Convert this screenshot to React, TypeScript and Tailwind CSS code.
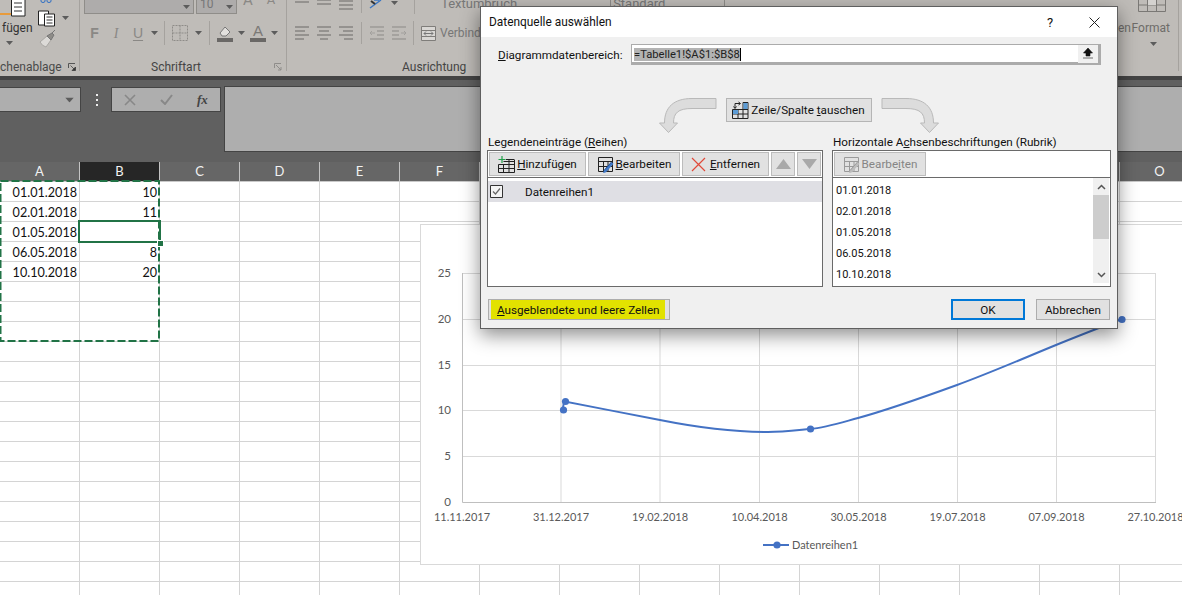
import React from 'react';

const columns = ['A', 'B', 'C', 'D', 'E', 'F', 'G', 'H', 'I', 'J', 'K', 'L', 'M', 'N', 'O'];
// G bis N liegen hinter dem Dialog
const visibleHeaders = ['A', 'B', 'C', 'D', 'E', 'F', 'O'];
const cellData: Record<string, string> = {
    A0: '01.01.2018',
    B0: '10',
    A1: '02.01.2018',
    B1: '11',
    A2: '01.05.2018',
    A3: '06.05.2018',
    B3: '8',
    A4: '10.10.2018',
    B4: '20',
};
const rows = Array.from({ length: 21 }, (_, i) => i);
const categories = ['01.01.2018', '02.01.2018', '01.05.2018', '06.05.2018', '10.10.2018'];

const xTicks = [
    { x: 462, label: '11.11.2017' },
    { x: 561, label: '31.12.2017' },
    { x: 660, label: '19.02.2018' },
    { x: 759.5, label: '10.04.2018' },
    { x: 858.5, label: '30.05.2018' },
    { x: 957.5, label: '19.07.2018' },
    { x: 1056.5, label: '07.09.2018' },
    { x: 1155.5, label: '27.10.2018' },
];
const yTicks = [
    { y: 502, label: '0' },
    { y: 456, label: '5' },
    { y: 410, label: '10' },
    { y: 365, label: '15' },
    { y: 319, label: '20' },
    { y: 273, label: '25' },
];

function Caret({ className = '' }: { className?: string }) {
    return (
        <svg width="7" height="4" viewBox="0 0 7 4" className={`shrink-0 ${className}`}>
            <path d="M0 0h7L3.5 4z" fill="#5c5c5c" />
        </svg>
    );
}

function Launcher() {
    return (
        <svg width="8" height="8" viewBox="0 0 8 8" className="shrink-0">
            <path d="M.5 5V.5H7" fill="none" stroke="#555" />
            <path d="M2.5 2.5l4 4M7.5 4v3.5H4z" fill="#333" stroke="#333" strokeWidth=".7" />
        </svg>
    );
}

function GridIcon({ children, dim = false }: { children?: React.ReactNode; dim?: boolean }) {
    const stroke = dim ? '#9a9a9a' : '#222';
    return (
        <svg width="17" height="17" viewBox="0 0 17 17" className="shrink-0">
            <path d="M1.5 1.5h14v14h-14zM1.5 5.5h14M1.5 10.5h14M6.5 5.5v10M11 5.5v10" fill="none" stroke={stroke} />
            {children}
        </svg>
    );
}

function AddIcon() {
    return (
        <svg width="17" height="17" viewBox="0 0 17 17" className="shrink-0">
            <path d="M5.5 5.5h11M.5 8.5h16V16.5H.5zM5.5 8.5v8M11 4v12.5M.5 12.5h16M16.5 4v5M8 3.5h8.5" fill="none" stroke="#222" />
            <path d="M4 0v7M.5 3.5h7" stroke="#22a04a" strokeWidth="1.2" fill="none" />
        </svg>
    );
}

function PencilPath({ dim = false }: { dim?: boolean }) {
    return (
        <>
            <path d="M7 14.5L14.5 6l2 1.8-7.5 8.5-3 1z" fill={dim ? '#bcbcbc' : '#3f78c8'} />
            <path d="M7 14.5L14.5 6" stroke={dim ? '#999' : '#1d4d94'} fill="none" />
        </>
    );
}

function SwapIcon() {
    return (
        <svg width="17" height="18" viewBox="0 0 17 18" className="shrink-0">
            <path d="M.5 8.5h15.5v9H.5zM6 8.5v9M11 1.5v16M.5 13h15.5M11 1.5h5v7" fill="none" stroke="#222" />
            <path d="M11.5 2h4v6h-4zM1 9h5v4H1z" fill="#5b9bd5" />
            <path d="M3 7V2.5h5M1.5 5.5L3 7.5l1.5-2M6.5 1l2 1.5-2 1.5" fill="none" stroke="#222" />
        </svg>
    );
}

function FlowArrow({ className = '' }: { className?: string }) {
    return (
        <svg width="61" height="37" viewBox="656 96 61 37" className={`shrink-0 ${className}`}>
            <path
                d="M716 97.5H692C674 97.5 664.5 106 664.5 122H659.5L668.5 131.5L677.5 122H673.5C673.5 112 678 107.5 692 107.5H716Z"
                fill="#dcdcdc"
                stroke="#b9b9b9"
            />
        </svg>
    );
}

function ToolButton({
    icon,
    children,
    width,
    disabled = false,
}: {
    icon?: React.ReactNode;
    children?: React.ReactNode;
    width: string;
    disabled?: boolean;
}) {
    return (
        <div
            className={`${width} h-[24px] shrink-0 flex items-center justify-center gap-[2px] bg-[#e1e1e1] border border-[#bcbcbc] [&>span]:pt-[1px] ${disabled ? 'text-[#858585]' : 'text-[#111]'}`}
        >
            {icon}
            {children}
        </div>
    );
}

function AlignTop() {
    return (
        <svg width="60" height="10" viewBox="0 0 60 10" className="shrink-0">
            <path d="M0 2h14M22 0h14M22 4h14M44 1h14M44 5h14M44 9h14" stroke="#6a6866" />
        </svg>
    );
}

function AlignIcon({ variant, className = '' }: { variant: number; className?: string }) {
    const paths = [
        'M0 1h14M0 5h10M0 9h14M0 13h9',
        'M0 1h14M2 5h10M0 9h14M3 13h8',
        'M0 1h14M4 5h10M0 9h14M5 13h9',
    ];
    return (
        <svg width="14" height="14" viewBox="0 0 14 14" className={`shrink-0 ${className}`}>
            <path d={paths[variant]} stroke="#6a6866" />
        </svg>
    );
}

function IndentIcon({ className = '' }: { className?: string }) {
    return (
        <svg width="14" height="14" viewBox="0 0 14 14" className={`shrink-0 ${className}`}>
            <path d="M0 1h14M7 5h7M7 9h7M0 13h14" stroke="#8b8986" />
            <path d="M0 7h5M0 7l2-2M0 7l2 2" fill="none" stroke="#a2a09d" />
        </svg>
    );
}

function Ribbon() {
    return (
        <div className="h-[76px] bg-[#bfbcb8] flex overflow-hidden text-[12px] text-[#4a4a4a] font-['Roboto',sans-serif]">
            {/* Zwischenablage */}
            <div className="w-[80px] shrink-0 border-r border-[#a5a29e] h-[71px] flex flex-col">
                <div className="h-[60px] shrink-0 flex">
                    <div className="w-[37px] shrink-0 flex flex-col">
                        <svg width="37" height="17" viewBox="0 0 37 17" className="shrink-0">
                            <path d="M0 14h11" stroke="#e89b3c" strokeWidth="2" />
                            <path d="M11.5 -2h13.5v18H11.5z" fill="#fff" stroke="#222" />
                            <path d="M14 3h8M14 7h8M14 11h8" stroke="#333" />
                        </svg>
                        <span className="mt-[3px] pl-[2px] leading-[16px] text-[#333]">fügen</span>
                        <Caret className="ml-[6px] mt-[5px]" />
                    </div>
                    <svg width="30" height="50" viewBox="0 0 30 50" className="shrink-0">
                        <path d="M4 0v1q0 1.5 2 1.5t2-1.5V0M10 0v1q0 1.5 2 1.5t2-1.5V0" fill="none" stroke="#2f6fc4" />
                        <path d="M1.5 11h10v14h-10z" fill="#fff" stroke="#222" />
                        <path d="M7.5 14h10v12h-10z" fill="#fff" stroke="#222" />
                        <path d="M9.5 17h6M9.5 20h6M9.5 23h6" stroke="#333" />
                        <path d="M3 42l7-6 4 4-5 7q-4-1-6-5z" fill="#dcdad7" stroke="#a8a6a2" />
                        <path d="M10 36l5-3 2 2-3 5zM15 33l3-3" fill="#8e8c88" stroke="#777" />
                    </svg>
                    <Caret className="mt-[16px] ml-[-5px]" />
                </div>
                <div className="flex shrink-0 items-center">
                    <span className="w-[68px] leading-[14px] whitespace-nowrap overflow-hidden">chenablage</span>
                    <Launcher />
                </div>
            </div>

            {/* Schriftart */}
            <div className="w-[207px] shrink-0 border-r border-[#a5a29e] h-[71px] flex flex-col pl-[4px]">
                <div className="h-[14px] shrink-0 flex">
                    <div className="w-[110px] h-[14px] border border-t-0 border-[#8f8d89] bg-[#aeacab] flex justify-end items-center pr-[3px]">
                        <Caret />
                    </div>
                    <div className="ml-[2px] w-[41px] h-[14px] border border-t-0 border-[#8f8d89] bg-[#aeacab] flex justify-between items-center pl-[3px] pr-[3px] text-[#777]">
                        <span className="leading-[10px] -mt-[6px]">10</span>
                        <Caret />
                    </div>
                    <span className="ml-[6px] -mt-[7px] text-[15px] leading-[14px] text-[#8a8885]">A</span>
                    <span className="ml-[14px] -mt-[7px] text-[13px] leading-[14px] text-[#8a8885]">A</span>
                </div>
                <div className="h-[32px] shrink-0 mt-[3px] flex items-center text-[#8a8885]">
                    <span className="w-[21px] text-center font-bold text-[14px] font-['Liberation_Sans',sans-serif]">F</span>
                    <span className="w-[22px] text-center italic text-[14px] font-['Liberation_Serif',serif]">I</span>
                    <span className="w-[22px] text-center text-[14px] underline underline-offset-2 font-['Liberation_Sans',sans-serif]">U</span>
                    <Caret className="ml-[2px]" />
                    <span className="ml-[6px] h-[24px] w-px bg-[#a5a29e]" />
                    <svg width="16" height="16" viewBox="0 0 16 16" className="ml-[7px]">
                        <path d="M.5 .5h15v15H.5zM8 .5v15M.5 8h15" fill="none" stroke="#8e8c89" strokeDasharray="2 1" />
                    </svg>
                    <Caret className="ml-[7px]" />
                    <span className="ml-[7px] h-[24px] w-px bg-[#a5a29e]" />
                    <svg width="16" height="17" viewBox="0 0 16 17" className="ml-[7px]">
                        <path d="M3 8l5-6 5 5-4 4H5z" fill="#e2e0dd" stroke="#777" />
                        <path d="M0 13h16v4H0z" fill="#6a6866" />
                    </svg>
                    <Caret className="ml-[5px]" />
                    <span className="ml-[5px] w-[16px] flex flex-col items-center leading-[12px] text-[15px] text-[#7b7976] font-['Liberation_Sans',sans-serif]">
                        A<span className="w-[16px] h-[4px] bg-[#6a6866] mt-[1px]" />
                    </span>
                    <Caret className="ml-[5px]" />
                </div>
                <div className="mt-[11px] shrink-0 flex items-center pl-[67px] leading-[14px] text-[#444]">
                    <span className="w-[123px]">Schriftart</span>
                    <svg width="8" height="8" viewBox="0 0 8 8" className="shrink-0">
                        <path d="M.5 5V.5H7M2 2l5 5M7 4v3H4" fill="none" stroke="#8f8d8a" />
                    </svg>
                </div>
            </div>

            {/* Ausrichtung */}
            <div className="flex-1 h-[71px] flex flex-col pl-[8px]">
                <div className="h-[14px] shrink-0 flex items-start">
                    <AlignTop />
                    <span className="ml-[6px] h-[13px] w-px bg-[#a5a29e] shrink-0" />
                    <svg width="22" height="9" viewBox="0 0 22 9" className="ml-[7px] shrink-0">
                        <path d="M1 8L12 0M5 0h5" stroke="#3a76c4" strokeWidth="1.4" fill="none" />
                        <path d="M2 1l4 3" stroke="#333" strokeWidth="2" />
                    </svg>
                    <Caret className="mt-[1px]" />
                    <span className="ml-[16px] h-[14px] w-px bg-[#a5a29e] shrink-0" />
                    <span className="ml-[26px] leading-[10px] -mt-[1px] text-[13px] text-[#777] whitespace-nowrap">Textumbruch</span>
                    <span className="ml-[93px] w-[115px] shrink-0 h-[8px] border-x border-[#8f8d89] leading-[7px] pl-[2px] text-[13px] text-[#777]">Standard</span>
                </div>
                <div className="h-[32px] shrink-0 mt-[3px] flex items-center">
                    <AlignIcon variant={0} />
                    <AlignIcon variant={1} className="ml-[8px]" />
                    <AlignIcon variant={2} className="ml-[8px]" />
                    <span className="ml-[8px] h-[22px] w-px bg-[#a5a29e] shrink-0" />
                    <IndentIcon className="ml-[8px]" />
                    <IndentIcon className="ml-[8px] -scale-x-100" />
                    <span className="ml-[7px] h-[24px] w-px bg-[#a5a29e] shrink-0" />
                    <svg width="15" height="15" viewBox="0 0 15 15" className="ml-[7px] shrink-0">
                        <path d="M.5 .5h14v14H.5zM.5 4.5h14M.5 10.5h14" fill="#d9d7d4" stroke="#7f7d7a" />
                        <path d="M3 7.5h9M3 7.5l2-2M3 7.5l2 2M12 7.5l-2-2M12 7.5l-2 2" fill="none" stroke="#777" />
                    </svg>
                    <span className="ml-[4px] text-[#777]">Verbinden</span>
                </div>
                <div className="mt-[11px] shrink-0 pl-[107px] leading-[14px] text-[#444]">Ausrichtung</div>
            </div>

            {/* rechts vom Dialog */}
            <div className="w-[65px] shrink-0 h-[71px] flex flex-col items-start">
                <svg width="30" height="12" viewBox="0 0 30 12" className="ml-[25px] shrink-0">
                    <path d="M.5 -1h27v12.5H.5zM.5 5h27M9.5 -1v12.5M18.5 -1v12.5" fill="none" stroke="#7a7875" />
                    <path d="M10 -1h8v6h-8z" fill="#d4d2cf" />
                </svg>
                <div className="mt-[9px] pl-[5px] w-full flex justify-between pr-[8px] leading-[14px] text-[#6e6c69]">
                    <span>en</span>
                    <span>Format</span>
                </div>
                <Caret className="mt-[7px] ml-[37px]" />
            </div>
            <div className="w-px h-[71px] bg-[#a5a29e] shrink-0" />
            <div className="w-[3px] shrink-0" />
        </div>
    );
}

function FormulaBar() {
    return (
        <div className="h-[86px] bg-[#606060] border-t-[4px] border-[#444] flex items-start pt-[7px]">
            <div className="w-[81px] shrink-0 h-[25px] bg-[#aeaeae] border border-[#444] border-l-0 flex items-center justify-end pr-[7px]">
                <Caret className="scale-125" />
            </div>
            <div className="w-[30px] shrink-0 h-[25px] flex flex-col items-center justify-center gap-[3px] pl-[1px]">
                <span className="w-[2px] h-[2px] bg-[#eee]" />
                <span className="w-[2px] h-[2px] bg-[#eee]" />
                <span className="w-[2px] h-[2px] bg-[#eee]" />
            </div>
            <div className="w-[110px] shrink-0 h-[25px] bg-[#aeaeae] border border-[#444] flex items-center">
                <svg width="12" height="12" viewBox="0 0 12 12" className="ml-[12px]">
                    <path d="M1 1l10 10M11 1L1 11" stroke="#888" strokeWidth="1.6" />
                </svg>
                <svg width="13" height="11" viewBox="0 0 13 11" className="ml-[24px]">
                    <path d="M1 6l4 4 7-9" stroke="#888" strokeWidth="2" fill="none" />
                </svg>
                <span className="ml-[24px] text-[13px] font-bold italic text-[#444] font-['Liberation_Serif',serif]">fx</span>
            </div>
            <div className="ml-[3px] flex-1 h-[66px] -mt-[1px] bg-[#aeaeae] border border-[#444] border-r-0" />
        </div>
    );
}

function ColumnHeaders() {
    return (
        <div className="h-[20px] flex bg-[#666] border-b border-[#c9c9c9] font-['Lato',sans-serif] text-[13px] text-[#f2f2f2]">
            {columns.map((col) => (
                <div
                    key={col}
                    className={`w-[80px] shrink-0 h-[19px] flex items-center justify-center border-r border-[#c4c4c4] ${col === 'B' ? 'bg-[#262626]' : ''}`}
                >
                    {visibleHeaders.includes(col) ? col : ''}
                </div>
            ))}
        </div>
    );
}

function Sheet() {
    return (
        <div className="grid grid-cols-[repeat(15,80px)] auto-rows-[20px] font-['Lato',sans-serif] text-[12.6px] text-[#111]">
            {rows.flatMap((row) =>
                columns.map((col) => (
                    <div
                        key={col + row}
                        className="border-r border-b border-[#d4d4d4] flex items-center justify-end pr-[2px] pt-[3px] leading-none"
                    >
                        {cellData[col + row]}
                    </div>
                )),
            )}
        </div>
    );
}

function Chart() {
    return (
        <div className="absolute left-[420px] top-[224px] w-[780px] h-[341px] bg-white border border-[#d9d9d9]">
            <svg width="780" height="341" viewBox="421 225 780 341" className="block font-['Lato',sans-serif]">
                {yTicks.slice(1).map((t) => (
                    <line key={t.y} x1="462" x2="1156" y1={t.y + 0.5} y2={t.y + 0.5} stroke="#d9d9d9" />
                ))}
                {xTicks.slice(1).map((t) => (
                    <line key={t.x} x1={t.x} x2={t.x} y1="273" y2="502" stroke="#d9d9d9" />
                ))}
                <path d="M462.5 273v229.5H1156" fill="none" stroke="#bfbfbf" />
                {yTicks.map((t) => (
                    <text key={t.label} x="451" y={t.y + 4} textAnchor="end" fontSize="11.5" fill="#595959">
                        {t.label}
                    </text>
                ))}
                {xTicks.map((t) => (
                    <text key={t.label} x={t.x} y="521" textAnchor="middle" fontSize="11" fill="#595959">
                        {t.label}
                    </text>
                ))}
                <path
                    d="M563 410C563 406 563.5 403 565 401.5C597 408 628 413.6 660 420C696 427.2 732 432 768 432C782 432 796 430.3 810 429C826 427.5 842 422.3 858 418C891 409 924 397 957 385C990 373 1023 358.5 1056 345C1078 336 1100 327.5 1122 319"
                    fill="none"
                    stroke="#4472c4"
                    strokeWidth="2"
                />
                {[
                    [563.5, 410],
                    [565.5, 401.5],
                    [810.5, 429],
                    [1122, 319.5],
                ].map(([cx, cy]) => (
                    <circle key={cx} cx={cx} cy={cy} r="3.6" fill="#4472c4" />
                ))}
                <line x1="763" x2="789" y1="545" y2="545" stroke="#4472c4" strokeWidth="2" />
                <circle cx="777" cy="545" r="3.6" fill="#4472c4" />
                <text x="792" y="549" fontSize="11" fill="#595959">
                    Datenreihen1
                </text>
            </svg>
        </div>
    );
}

function SelectionOverlay() {
    return (
        <>
            <svg width="164" height="166" viewBox="0 178 164 166" className="absolute left-0 top-[178px]">
                <rect x="0.5" y="181" width="158.5" height="160" fill="none" stroke="#217346" strokeWidth="2" strokeDasharray="8 3" />
            </svg>
            <div className="absolute left-[78px] top-[220px] w-[83px] h-[23px] border-2 border-[#217346]" />
            <div className="absolute left-[157px] top-[240px] w-[5px] h-[5px] bg-[#217346] border border-white box-content" />
        </>
    );
}

function Dialog() {
    return (
        <div className="absolute left-[480px] top-[6px] w-[638px] h-[323px] bg-[#f0f0f0] border border-[#5f5f5f] shadow-[0_6px_18px_rgba(0,0,0,0.45)] flex flex-col font-['Roboto',sans-serif] text-[11.7px] text-[#111] leading-[15px]">
            <div className="h-[30px] shrink-0 bg-white flex items-center pl-[8px] text-[11.9px]">
                <span className="flex-1">Datenquelle auswählen</span>
                <span className="w-[14px] text-center text-[13px] mr-[32px]">?</span>
                <svg width="11" height="11" viewBox="0 0 11 11" className="mr-[17px]">
                    <path d="M.5 .5l10 10M10.5 .5l-10 10" stroke="#222" fill="none" />
                </svg>
            </div>

            <div className="flex flex-col pl-[6px] pr-[6px]">
                {/* Datenbereich */}
                <div className="mt-[7px] h-[21px] flex items-center pl-[11px]">
                    <span className="w-[133px] shrink-0 pt-[1px]">
                        <u>D</u>iagrammdatenbereich:
                    </span>
                    <div className="w-[470px] h-[21px] shrink-0 bg-white border border-[#ababab] border-r-[3px] border-b-[3px] flex items-center pl-[2px]">
                        <span className="mt-[1px] bg-[#b3b3b3] border-r border-black leading-[13px] text-[11.2px] text-[#222]">=Tabelle1!$A$1:$B$8</span>
                        <span className="flex-1" />
                        <div className="w-[20px] h-[18px] bg-[#f0f0f0] flex items-center justify-center">
                            <svg width="10" height="11" viewBox="0 0 10 11">
                                <path d="M5 0l4.5 5H7v3H3V5H.5zM0 10h10" fill="#111" stroke="#111" strokeWidth=".6" />
                            </svg>
                        </div>
                    </div>
                </div>

                {/* Zeile/Spalte */}
                <div className="mt-[32px] h-[34px] flex items-start justify-center pr-[1px]">
                    <FlowArrow />
                    <div className="ml-[9px] w-[146px] h-[24px] mt-[1px] shrink-0 flex items-center justify-center gap-[2px] bg-[#e1e1e1] border border-[#b5b5b5]">
                        <SwapIcon />
                        <span className="pt-[1px]">
                            Zeile/Spalte <u>t</u>auschen
                        </span>
                    </div>
                    <FlowArrow className="ml-[9px] -scale-x-100" />
                </div>

                {/* Listen */}
                <div className="mt-[4px] flex gap-[9px]">
                    <div className="w-[336px] shrink-0">
                        <div className="h-[15px] pl-[1px] leading-[14px]">
                            Legendeneinträge (<u>R</u>eihen)
                        </div>
                        <div className="h-[137px] bg-white border border-[#6a6a6a] flex flex-col">
                            <div className="h-[27px] shrink-0 border-b border-[#6a6a6a] flex items-center pl-[1px] gap-[2px]">
                                <ToolButton width="w-[97px]" icon={<AddIcon />}>
                                    <span>
                                        <u>H</u>inzufügen
                                    </span>
                                </ToolButton>
                                <ToolButton
                                    width="w-[92px]"
                                    icon={
                                        <GridIcon>
                                            <PencilPath />
                                        </GridIcon>
                                    }
                                >
                                    <span>
                                        <u>B</u>earbeiten
                                    </span>
                                </ToolButton>
                                <ToolButton
                                    width="w-[87px]"
                                    icon={
                                        <svg width="15" height="15" viewBox="0 0 15 15" className="shrink-0 mr-[2px]">
                                            <path d="M1 1l13 13M14 1L1 14" stroke="#e04a3a" strokeWidth="1.2" />
                                        </svg>
                                    }
                                >
                                    <span>
                                        <u>E</u>ntfernen
                                    </span>
                                </ToolButton>
                                <ToolButton
                                    width="w-[24px]"
                                    disabled
                                    icon={
                                        <svg width="15" height="10" viewBox="0 0 15 10">
                                            <path d="M7.5 0L15 10H0z" fill="#a9a9a9" />
                                        </svg>
                                    }
                                />
                                <ToolButton
                                    width="w-[24px]"
                                    disabled
                                    icon={
                                        <svg width="15" height="10" viewBox="0 0 15 10">
                                            <path d="M7.5 10L15 0H0z" fill="#a9a9a9" />
                                        </svg>
                                    }
                                />
                            </div>
                            <div className="mt-[3px] h-[21px] bg-[#dfdfe4] flex items-center pl-[2px]">
                                <svg width="13" height="13" viewBox="0 0 13 13" className="shrink-0">
                                    <path d="M.5 .5h12v12H.5z" fill="#f4f4f4" stroke="#333" />
                                    <path d="M3 6.5l2.5 2.5L10 3.5" fill="none" stroke="#666" strokeWidth="1.2" />
                                </svg>
                                <span className="ml-[22px] pt-[1px]">Datenreihen1</span>
                            </div>
                        </div>
                    </div>
                    <div className="w-[279px] shrink-0">
                        <div className="h-[15px] pl-[1px] leading-[14px] whitespace-nowrap">
                            Horizontale A<u>c</u>hsenbeschriftungen (Rubrik)
                        </div>
                        <div className="h-[137px] bg-white border border-[#6a6a6a] flex flex-col">
                            <div className="h-[27px] shrink-0 border-b border-[#6a6a6a] flex items-center pl-[1px]">
                                <ToolButton
                                    width="w-[92px]"
                                    disabled
                                    icon={
                                        <GridIcon dim>
                                            <PencilPath dim />
                                        </GridIcon>
                                    }
                                >
                                    <span>
                                        Bearbe<u>i</u>ten
                                    </span>
                                </ToolButton>
                            </div>
                            <div className="flex-1 flex">
                                <div className="flex-1 flex flex-col pl-[3px] pt-[2px] text-[11px]">
                                    {categories.map((c) => (
                                        <div key={c} className="h-[21px] flex items-center">
                                            {c}
                                        </div>
                                    ))}
                                </div>
                                <div className="w-[16px] mr-[1px] h-[105px] bg-[#f0f0f0] flex flex-col items-center">
                                    <svg width="9" height="6" viewBox="0 0 9 6" className="mt-[6px]">
                                        <path d="M1 5l3.5-3.5L8 5" fill="none" stroke="#555" strokeWidth="1.5" />
                                    </svg>
                                    <div className="mt-[5px] w-[16px] h-[44px] bg-[#cdcdcd]" />
                                    <div className="flex-1" />
                                    <svg width="9" height="6" viewBox="0 0 9 6" className="mb-[5px]">
                                        <path d="M1 1l3.5 3.5L8 1" fill="none" stroke="#555" strokeWidth="1.5" />
                                    </svg>
                                </div>
                            </div>
                        </div>
                    </div>
                </div>

                {/* Fussleiste */}
                <div className="mt-[12px] flex items-start">
                    <div className="ml-[1px] w-[182px] h-[21px] bg-[#e1e1e1] border border-[#adadad] flex items-center px-[2px]">
                        <span className="w-[174px] h-[19px] bg-[#e2e200] flex items-center pl-[6px] pt-[2px] whitespace-nowrap">
                            <span>
                                <u>A</u>usgeblendete und leere Zellen
                            </span>
                        </span>
                    </div>
                    <div className="ml-[281px] w-[74px] h-[21px] bg-[#e1e1e1] border-2 border-[#0078d7] flex items-center justify-center pt-[1px]">
                        OK
                    </div>
                    <div className="ml-[11px] w-[74px] h-[21px] bg-[#e1e1e1] border border-[#adadad] flex items-center justify-center pt-[2px]">
                        Abbrechen
                    </div>
                </div>
            </div>
        </div>
    );
}

export default function App() {
    return (
        <div className="relative w-[1182px] h-[595px] overflow-hidden bg-white">
            <Ribbon />
            <FormulaBar />
            <ColumnHeaders />
            <Sheet />
            <SelectionOverlay />
            <Chart />
            <Dialog />
        </div>
    );
}
